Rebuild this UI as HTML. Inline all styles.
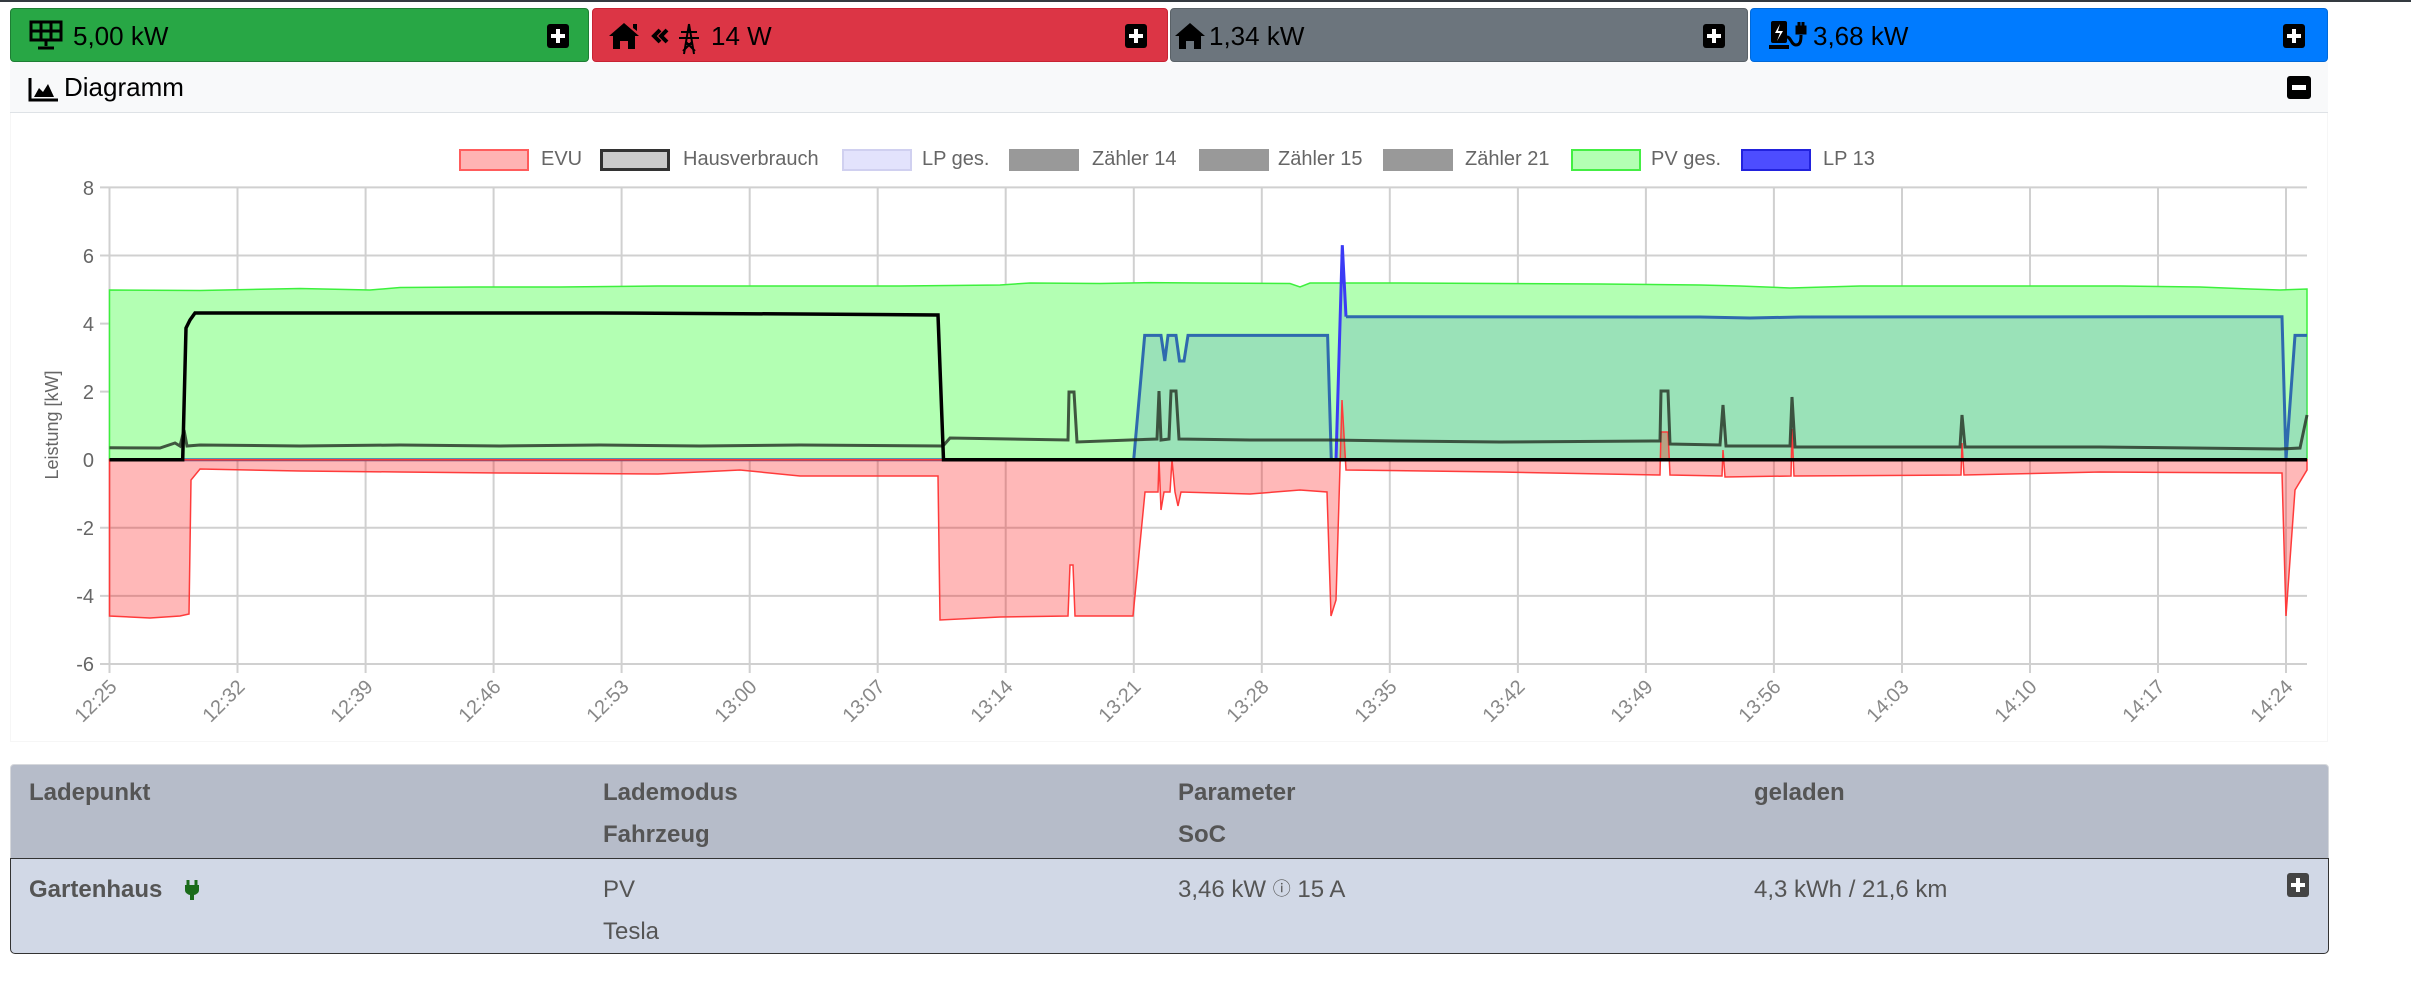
<!DOCTYPE html>
<html><head><meta charset="utf-8">
<style>
*{box-sizing:border-box;margin:0;padding:0}
body{width:2411px;height:1001px;background:#fff;font-family:"Liberation Sans",sans-serif;position:relative;overflow:hidden}
.topline{position:absolute;left:0;top:0;width:2411px;height:2px;background:#343a40}
.box{position:absolute;top:8px;height:54px;border-radius:4px;border:1px solid rgba(0,0,0,0.15)}
.box .t{position:absolute;top:12px;font-size:26px;color:#000}
.pl{position:absolute;top:15px;width:22px;height:24px;background:#000;border-radius:3px}
.pl:before{content:"";position:absolute;left:9px;top:5px;width:4px;height:14px;background:#fff}
.pl:after{content:"";position:absolute;left:4px;top:10px;width:14px;height:4px;background:#fff}
.card{position:absolute;left:10px;top:62px;width:2318px;height:680px;border:1px solid #f6f6f6;border-top:none}
.dh{position:absolute;left:10px;top:62px;width:2318px;height:51px;background:#f8f9fa;border-bottom:1px solid #dee2e6}
.mi{position:absolute;left:2287px;top:76px;width:24px;height:23px;background:#000;border-radius:3px}
.mi:after{content:"";position:absolute;left:5px;top:9px;width:14px;height:5px;background:#fff}
.th{position:absolute;left:10px;top:764px;width:2319px;height:95px;background:#b6bcc9;border-radius:4px 4px 0 0;border:1px solid #d6d8dc}
.tr{position:absolute;left:10px;top:858px;width:2319px;height:96px;background:#d1d8e6;border:1.5px solid #333;border-radius:0 0 5px 5px}
.c{position:absolute;font-size:24px;color:#555}
.b{font-weight:bold}
.lg{position:absolute;top:149px;width:70px;height:22px}
.lt{position:absolute;top:148px;font-size:20px;color:#666}
</style></head><body>
<div class="topline"></div>

<div class="box" style="left:10px;width:579px;background:#28a745;border-color:#1e7e34">
 <svg style="position:absolute;left:18px;top:11px" width="36" height="32" viewBox="0 0 36 32"><rect x="2" y="2" width="30" height="18" fill="none" stroke="#000" stroke-width="3"/><path d="M12 2v18M22 2v18M2 11h30" stroke="#000" stroke-width="3"/><path d="M17 20v6M9 28h16" stroke="#000" stroke-width="3"/></svg>
 <span class="t" style="left:62px">5,00 kW</span><div class="pl" style="left:536px"></div></div>

<div class="box" style="left:592px;width:576px;background:#dc3545;border-color:#c82333">
 <svg style="position:absolute;left:16px;top:13px" width="110" height="34" viewBox="0 0 110 34"><path d="M0 14L15 1 30 14h-4v13h-7v-8h-8v8H4V14z" fill="#000"/><path d="M24 2h4v7l-4-3z" fill="#000"/><path d="M51 8l-6 6 6 6M58 8l-6 6 6 6" stroke="#000" stroke-width="4" fill="none"/><path d="M80 2l-5 30M80 2l5 30M72 10h16M70 16h20M77 22h6M74 29l9-9M86 29l-9-9M80 2v8" stroke="#000" stroke-width="2" fill="none"/></svg>
 <span class="t" style="left:118px">14 W</span><div class="pl" style="left:532px"></div></div>

<div class="box" style="left:1170px;width:578px;background:#6c757d;border-color:#5a6268">
 <svg style="position:absolute;left:4px;top:13px" width="32" height="30" viewBox="0 0 32 30"><path d="M0 14L15 1 30 14h-4v13h-7v-8h-8v8H4V14z" fill="#000"/></svg>
 <span class="t" style="left:38px">1,34 kW</span><div class="pl" style="left:532px"></div></div>

<div class="box" style="left:1750px;width:578px;background:#007bff;border-color:#0069d9">
 <svg style="position:absolute;left:18px;top:10px" width="40" height="34" viewBox="0 0 40 34"><rect x="2" y="2" width="16" height="22" rx="2" fill="#000"/><path d="M11 5l-5 9h5l-3 8 6-10h-5z" fill="#fff"/><rect x="0" y="26" width="20" height="4" fill="#000"/><path d="M18 18c4 0 4 8 9 8s5-6 5-10" stroke="#000" stroke-width="3" fill="none"/><path d="M28 8v6h8V8zM30 3v5M34 3v5" stroke="#000" stroke-width="3" fill="#000"/></svg>
 <span class="t" style="left:62px">3,68 kW</span><div class="pl" style="left:532px"></div></div>

<div class="card"></div>
<div class="dh"></div>
<svg style="position:absolute;left:28px;top:78px" width="30" height="24" viewBox="0 0 30 24"><path d="M2 0v22h28" stroke="#000" stroke-width="3" fill="none"/><path d="M6 19l5-9 4 4 5-8 6 13z" fill="#000"/></svg>
<div style="position:absolute;left:64px;top:72px;font-size:26px;color:#000">Diagramm</div>
<div class="mi"></div>

<div class="lg" style="left:459px;background:#ffb3b3;border:2px solid #ff5c5c"></div><div class="lt" style="left:541px">EVU</div>
<div class="lg" style="left:600px;background:#ccc;border:3px solid #333"></div><div class="lt" style="left:683px">Hausverbrauch</div>
<div class="lg" style="left:842px;background:#e3e3fc;border:2px solid #d0d0f0"></div><div class="lt" style="left:922px">LP ges.</div>
<div class="lg" style="left:1009px;background:#999"></div><div class="lt" style="left:1092px">Zähler 14</div>
<div class="lg" style="left:1199px;background:#999"></div><div class="lt" style="left:1278px">Zähler 15</div>
<div class="lg" style="left:1383px;background:#999"></div><div class="lt" style="left:1465px">Zähler 21</div>
<div class="lg" style="left:1571px;background:#b3ffb3;border:2px solid #44ee44"></div><div class="lt" style="left:1651px">PV ges.</div>
<div class="lg" style="left:1741px;background:#4d4dff;border:2px solid #2222dd"></div><div class="lt" style="left:1823px">LP 13</div>

<svg style="position:absolute;left:0;top:0" width="2411" height="760" viewBox="0 0 2411 760">
<g stroke="#d0d0d0" stroke-width="2">
<path d="M100 187.4H2307M100 255.5H2307M100 323.6H2307M100 391.6H2307M100 527.8H2307M100 595.9H2307M100 664H2307"/>
<path d="M109.5 187V673M237.5 187V673M365.6 187V673M493.6 187V673M621.6 187V673M749.7 187V673M877.7 187V673M1005.7 187V673M1133.8 187V673M1261.8 187V673M1389.8 187V673M1517.9 187V673M1645.9 187V673M1773.9 187V673M1902 187V673M2030 187V673M2158 187V673M2286 187V673"/>
</g>
<g fill="#666" font-size="20" text-anchor="end" font-family="Liberation Sans,sans-serif">
<text x="94" y="195">8</text><text x="94" y="263">6</text><text x="94" y="331">4</text><text x="94" y="399">2</text><text x="94" y="467">0</text><text x="94" y="535">-2</text><text x="94" y="603">-4</text><text x="94" y="671">-6</text>
</g>
<text transform="translate(58,425) rotate(-90)" text-anchor="middle" fill="#666" font-size="18" font-family="Liberation Sans,sans-serif">Leistung [kW]</text>
<g fill="#888" font-size="20" text-anchor="end" font-family="Liberation Sans,sans-serif">
<text transform="translate(118,688) rotate(-45)">12:25</text>
<text transform="translate(246,688) rotate(-45)">12:32</text>
<text transform="translate(374,688) rotate(-45)">12:39</text>
<text transform="translate(502,688) rotate(-45)">12:46</text>
<text transform="translate(630,688) rotate(-45)">12:53</text>
<text transform="translate(758,688) rotate(-45)">13:00</text>
<text transform="translate(886,688) rotate(-45)">13:07</text>
<text transform="translate(1014,688) rotate(-45)">13:14</text>
<text transform="translate(1142,688) rotate(-45)">13:21</text>
<text transform="translate(1270,688) rotate(-45)">13:28</text>
<text transform="translate(1398,688) rotate(-45)">13:35</text>
<text transform="translate(1526,688) rotate(-45)">13:42</text>
<text transform="translate(1654,688) rotate(-45)">13:49</text>
<text transform="translate(1782,688) rotate(-45)">13:56</text>
<text transform="translate(1910,688) rotate(-45)">14:03</text>
<text transform="translate(2038,688) rotate(-45)">14:10</text>
<text transform="translate(2166,688) rotate(-45)">14:17</text>
<text transform="translate(2294,688) rotate(-45)">14:24</text>
</g>
<path d="M109.5 290L200 290.5 300 288.5 370 290 400 287.5 475 287 560 287 658 286 841 286 900 286 1000 285 1030 283 1100 283.5 1150 282.6 1200 283 1290 283.5 1300 287 1310 283 1400 283 1500 283.5 1600 284 1700 285 1740 286 1790 288 1860 286 1940 286 2000 286 2120 286 2200 287 2250 289 2280 290 2307 289V459.7H109.5Z" fill="#b3ffb3" stroke="#3df03d" stroke-width="1.5"/>
<path d="M1133.7 459.7L1144.7 335.4 1161 335.4 1164.8 361 1168 335.4 1176 335.4 1179.5 361 1184 361 1188 335.4 1327.6 335.4 1331.3 459.7 1336 459.7 1342.3 245.2 1346 316.7 1700 317 1750 318 1800 317 2282 316.7 2286 459.7 2295 335.4 2307 335.4V459.7Z" fill="rgba(80,140,200,0.25)"/>
<path d="M109.5 459.7H1133.7L1144.7 335.4 1161 335.4 1164.8 361 1168 335.4 1176 335.4 1179.5 361 1184 361 1188 335.4 1327.6 335.4 1331.3 459.7 1336 459.7" fill="none" stroke="#2f6aae" stroke-width="3"/>
<path d="M1336 459.7L1342.3 245.2 1346 316.7" fill="none" stroke="#3b3bf5" stroke-width="3"/>
<path d="M1346 316.7L1700 317 1750 318 1800 317 2282 316.7 2286 459.7 2295 335.4 2307 335.4" fill="none" stroke="#2f6aae" stroke-width="3"/>
<path d="M109.5 459.7V616L150 618 180 616 189 614 191 480 200 469 300 471 400 472 500 473 658 474 740 470 800 476 938 476 940 620 1000 617 1068 616 1070 565 1073 565 1075 616 1133 616 1145 492 1158 492 1159 459 1161 510 1164 492 1170 492 1172 460 1175 492 1178 506 1181 492 1250 494 1300 490 1327 492 1331 616 1336 600 1342 400 1346 470 1500 472 1660 475 1661 432 1668 432 1670 475 1722 476 1723 450 1725 477 1791 476 1792 429 1794 476 1961 475 1962 443 1964 475 2100 472 2282 473 2286 616 2295 490 2307 470V459.7Z" fill="rgba(255,0,0,0.28)" stroke="#ff3b3b" stroke-width="1.5"/>
<path d="M109.5 447.8L160 448 175 443 180 446 184 430 187 446 200 445 300 446 400 445 500 446 600 445 700 446 800 445 943 446 950 438 1068 440 1069 392 1074 392 1077 442 1130 440 1157 439 1159 391 1161 440 1169 439 1171 391 1176 391 1179 439 1250 440 1330 440 1400 441 1500 442 1660 441 1661 391 1668 391 1670 444 1720 445 1723 405 1726 446 1790 446 1792 397 1795 447 1960 447 1962 415 1965 447 2100 447 2280 449 2300 448 2307 415" fill="none" stroke="#2a3a2a" stroke-width="3" opacity="0.85"/>
<path d="M109.5 459.7L182.7 459.7 186 328 190 320 195 313 400 313 600 313 800 314 938 315 943.5 459.7 2307 459.7" fill="none" stroke="#000" stroke-width="3.5"/>
</svg>

<div class="th"></div>
<div class="tr"></div>
<div class="c b" style="left:29px;top:779px">Ladepunkt</div>
<div class="c b" style="left:603px;top:779px">Lademodus</div>
<div class="c b" style="left:603px;top:821px">Fahrzeug</div>
<div class="c b" style="left:1178px;top:779px">Parameter</div>
<div class="c b" style="left:1178px;top:821px">SoC</div>
<div class="c b" style="left:1754px;top:779px">geladen</div>
<div class="c b" style="left:29px;top:876px">Gartenhaus</div>
<svg style="position:absolute;left:184px;top:880px" width="16" height="20" viewBox="0 0 16 20"><path d="M4 0v5M12 0v5" stroke="#1a6b1a" stroke-width="3"/><path d="M1 5h14v5a7 5 0 0 1-5 5v5H6v-5a7 5 0 0 1-5-5z" fill="#1a6b1a"/></svg>
<div class="c" style="left:603px;top:876px">PV</div>
<div class="c" style="left:603px;top:918px">Tesla</div>
<div class="c" style="left:1178px;top:876px">3,46 kW <span style="font-size:18px;position:relative;top:-2px">ⓘ</span> 15 A</div>
<div class="c" style="left:1754px;top:876px">4,3 kWh / 21,6 km</div>
<div class="pl" style="left:2287px;top:873px;background:#444"></div>
</body></html>
